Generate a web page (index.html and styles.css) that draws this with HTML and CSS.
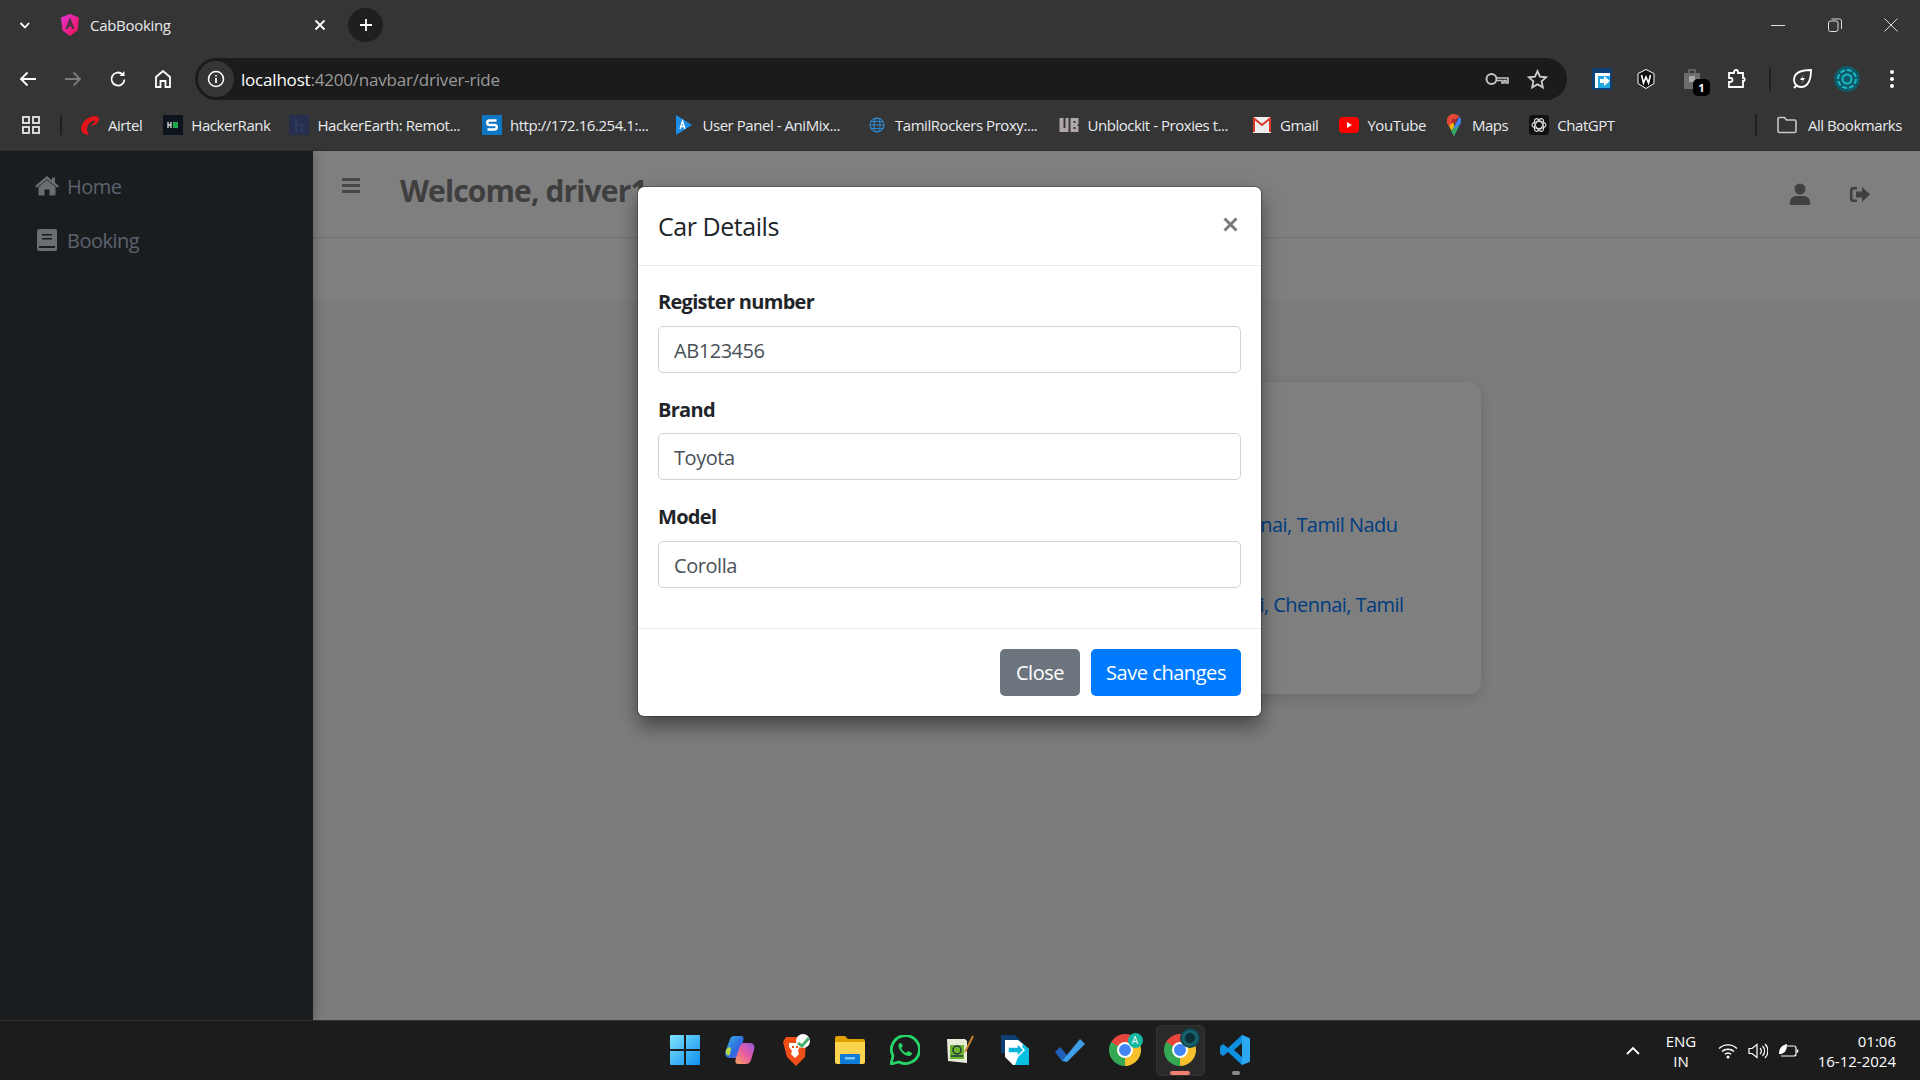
FILE: index.html
```html
<!DOCTYPE html>
<html lang="en">
<head>
    <meta charset="UTF-8">
    <meta name="viewport" content="width=device-width, initial-scale=1.0">
    <title>CabBooking</title>
    <link rel="stylesheet" href="styles.css">
</head>
<body>
    <!-- Browser tab strip -->
    <div class="tabstrip">
        <svg class="tab-list" width="14" height="14" viewBox="0 0 14 14"><path d="M2.5 5l4.500 4.500L11 5" fill="none" stroke="#fff" stroke-width="1.800"/></svg>
        <svg class="tab-favicon" width="20" height="22" viewBox="0 0 20 22">
            <defs><linearGradient id="ng" x1="0" y1="0" x2="1" y2="1"><stop offset="0" stop-color="#e535d8"/><stop offset="1" stop-color="#f0104e"/></linearGradient></defs>
            <path d="M10 0l9 3.500-1.500 13L10 22l-7.500-5.500L1 3.500z" fill="url(#ng)"/>
            <path d="M10 3.500L5.500 15h2l1-2.500h3l1 2.500h2zM9.200 10.800L10 8.500l.8 2.300z" fill="#353535"/>
        </svg>
        <span class="tab-title">CabBooking</span>
        <svg class="tab-close" width="12" height="12" viewBox="0 0 12 12"><path d="M1.500 1.500l9 9M10.500 1.500l-9 9" stroke="#fff" stroke-width="1.800"/></svg>
        <div class="tab-new"><svg width="14" height="14" viewBox="0 0 14 14"><path d="M7 1v12M1 7h12" stroke="#fff" stroke-width="1.800"/></svg></div>
        <div class="window-controls">
            <svg width="14" height="14" viewBox="0 0 14 14"><path d="M0 7.500h14" stroke="#ddd"/></svg>
            <svg width="14" height="14" viewBox="0 0 14 14"><rect x=".5" y="3" width="9.500" height="10.500" rx="2" fill="none" stroke="#ddd"/><path d="M3.500 1h8a2 2 0 0 1 2 2v8" fill="none" stroke="#ddd"/></svg>
            <svg width="14" height="14" viewBox="0 0 14 14"><path d="M.5.500l13 13M13.500.500l-13 13" stroke="#ddd"/></svg>
        </div>
    </div>

    <!-- Address bar row -->
    <div class="toolbar">
        <div class="tool-btn"><svg width="20" height="20" viewBox="0 0 20 20"><path d="M18 10H3M9.500 3.500L3 10l6.500 6.500" fill="none" stroke="#fff" stroke-width="1.800"/></svg></div>
        <div class="tool-btn"><svg width="20" height="20" viewBox="0 0 20 20"><path d="M2 10h15M10.500 3.500L17 10l-6.500 6.500" fill="none" stroke="#7b7b7b" stroke-width="1.800"/></svg></div>
        <div class="tool-btn"><svg width="20" height="20" viewBox="0 0 20 20"><path d="M16.500 10.500a6.500 6.500 0 1 1-2-5.200" fill="none" stroke="#fff" stroke-width="1.800"/><path d="M16.500 2v5h-5z" fill="#fff"/></svg></div>
        <div class="tool-btn"><svg width="20" height="20" viewBox="0 0 20 20"><path d="M10 2L3 8v10h4.500v-6h5v6H17V8z" fill="none" stroke="#fff" stroke-width="1.800"/></svg></div>
        <div class="omnibox">
            <div class="site-chip"><svg width="18" height="18" viewBox="0 0 18 18"><circle cx="9" cy="9" r="7.500" fill="none" stroke="#fff" stroke-width="1.500"/><path d="M9 8v5M9 5v1.600" stroke="#fff" stroke-width="1.700"/></svg></div>
            <span class="url"><span class="url-host">localhost</span>:4200/navbar/driver-ride</span>
            <svg class="omni-key" width="24" height="14" viewBox="0 0 24 14"><circle cx="6.500" cy="7" r="5" fill="none" stroke="#c4c4c4" stroke-width="2"/><path d="M11.500 6H23v5h-2V8.500h-2V11h-2V8.500h-5.500" fill="none" stroke="#c4c4c4" stroke-width="1.600"/></svg>
            <svg class="omni-star" width="21" height="21" viewBox="0 0 20 20"><path d="M10 2l2.400 5.300 5.800.6-4.300 3.900 1.200 5.700L10 14.600l-5.100 2.900 1.200-5.700-4.300-3.900 5.800-.6z" fill="none" stroke="#d0d0d0" stroke-width="1.700"/></svg>
        </div>
        <div class="toolbar-exts">
            <div class="tool-btn"><svg width="20" height="22" viewBox="0 0 20 22"><rect width="20" height="22" rx="2" fill="#0d3f73"/><path d="M3 20V5h15v15z" fill="#23a6e0"/><path d="M3 5h15v3H6v12H3z" fill="#fff"/><path d="M8 11h4V8l6 5-6 5v-3H8z" fill="#fff"/></svg></div>
            <div class="tool-btn ext-wallet"><svg width="20" height="20" viewBox="0 0 20 20"><path d="M10 .500l8 4v10l-8 5-8-5v-10z" fill="#111" stroke="#fff"/><path d="M5.500 6l2 8 2.500-6 2.500 6 2-8" fill="none" stroke="#fff" stroke-width="1.600"/></svg></div>
            <div class="tool-btn ext-badged">
                <svg width="18" height="22" viewBox="0 0 18 22"><path d="M1 5h16v16H1z" fill="#6d6d6d"/><path d="M6 5V2h6v3" fill="none" stroke="#6d6d6d" stroke-width="1.500"/><rect x="6" y="8" width="6" height="6" fill="#a8a8a8"/></svg>
                <span class="ext-count">1</span>
            </div>
            <div class="tool-btn"><svg width="20" height="20" viewBox="0 0 20 20"><path d="M2 4h5V3a2 2 0 0 1 4 0v1h5v5h1a2 2 0 0 1 0 3h-1v6H2v-5h1.500a2 2 0 0 0 0-4H2z" fill="none" stroke="#fff" stroke-width="1.800"/></svg></div>
            <div class="toolbar-sep"></div>
            <div class="tool-btn"><svg width="22" height="22" viewBox="0 0 22 22"><path d="M20 2C10 2 3 5 3 12c0 4 3 7 7 7 7 0 10-7 10-17zM3 20l3-3" fill="none" stroke="#fff" stroke-width="1.800"/><path d="M13 6l-4 6h3l-2 4 4-6h-3z" fill="#fff"/></svg></div>
            <div class="tool-btn"><svg width="26" height="26" viewBox="0 0 26 26"><circle cx="13" cy="13" r="13" fill="#0e5a66"/><circle cx="13" cy="13" r="9" fill="none" stroke="#1bb7c7" stroke-width="2" stroke-dasharray="5 2"/><circle cx="13" cy="13" r="4.500" fill="none" stroke="#1bb7c7" stroke-width="2"/></svg></div>
            <div class="tool-btn"><svg width="6" height="20" viewBox="0 0 6 20"><circle cx="3" cy="3" r="2" fill="#fff"/><circle cx="3" cy="10" r="2" fill="#fff"/><circle cx="3" cy="17" r="2" fill="#fff"/></svg></div>
        </div>
    </div>

    <!-- Bookmarks row -->
    <div class="bookmarks">
        <svg class="apps-icon" width="18" height="18" viewBox="0 0 18 18"><g fill="none" stroke="#e8e8e8" stroke-width="1.800"><rect x="1" y="1" width="6" height="6"/><rect x="11" y="1" width="6" height="6"/><rect x="1" y="11" width="6" height="6"/><rect x="11" y="11" width="6" height="6"/></g></svg>
        <div class="bookmark-sep"></div>
        <div class="bm"><svg width="20" height="20" viewBox="0 0 20 20"><path d="M1 13C2 6 9 1 15 1c4 0 5 3 3 6-2 3-5 4-8 4 3-2 5-3 5-5-3-1-7 3-8 7 0 3 1 5 2 7-4 0-8-2-8-7z" fill="#e4141b"/></svg><span>Airtel</span></div>
        <div class="bm bm-hr"><svg width="20" height="20" viewBox="0 0 20 20"><rect width="20" height="20" fill="#0e141e"/><path d="M5 7v6M8 7v6M5 10h3" stroke="#ddd" stroke-width="1.300"/><rect x="10" y="7" width="5" height="6" fill="#1ba94c"/></svg><span>HackerRank</span></div>
        <div class="bm bm-long"><svg width="20" height="20" viewBox="0 0 20 20"><rect width="20" height="20" fill="#262f4d"/><path d="M7 3v14M7 10h6v7" fill="none" stroke="#2e3a60" stroke-width="2"/></svg><span>HackerEarth: Remot...</span></div>
        <div class="bm bm-long"><svg width="20" height="20" viewBox="0 0 20 20"><rect width="20" height="20" fill="#0e77c4"/><path d="M14.500 5.500h-7a1.500 1.500 0 0 0 0 4.500h5a1.500 1.500 0 0 1 0 4.500h-7" fill="none" stroke="#fff" stroke-width="2.400"/></svg><span>http://172.16.254.1:...</span></div>
        <div class="bm bm-long"><svg width="16" height="20" viewBox="0 0 16 20"><path d="M0 0l16 10L0 20z" fill="#1b8ee8"/><path d="M4 14l2.500-8 2.500 8M5 11.500h3" fill="none" stroke="#fff" stroke-width="1.400"/></svg><span>User Panel - AniMix...</span></div>
        <div class="bm bm-long"><svg width="16" height="16" viewBox="0 0 16 16"><g fill="none" stroke="#2f88cc" stroke-width="1.200"><circle cx="8" cy="8" r="7"/><ellipse cx="8" cy="8" rx="3" ry="7"/><path d="M1 8h14M2 4.500h12M2 11.500h12"/></g></svg><span>TamilRockers Proxy:...</span></div>
        <div class="bm bm-long"><svg width="19" height="14" viewBox="0 0 19 14"><path d="M0 0h4v10h2V0h3v14H0zM11 0h8v6h-1v2h1v6h-8zM14 3v2h2V3zm0 6v2h2V9z" fill="#b0a8a8" fill-rule="evenodd"/></svg><span>Unblockit - Proxies t...</span></div>
        <div class="bm"><svg width="18" height="16" viewBox="0 0 18 16"><rect width="18" height="16" fill="#eee"/><path d="M1 15V1.500L9 8l8-6.500V15" fill="none" stroke="#d8392b" stroke-width="2"/></svg><span>Gmail</span></div>
        <div class="bm bm-yt"><svg width="20" height="16" viewBox="0 0 20 16"><rect width="20" height="16" rx="4" fill="#f00"/><path d="M8 5l5 3-5 3z" fill="#fff"/></svg><span>YouTube</span></div>
        <div class="bm"><svg width="14" height="22" viewBox="0 0 14 22"><path d="M7 0a7 7 0 0 0-7 7c0 2 1 3.500 2 5l5 10z" fill="#f5b400"/><path d="M7 0a7 7 0 0 1 5.500 2.600L2 12C1 10.500 0 9 0 7a7 7 0 0 1 7-7z" fill="#e8453c"/><path d="M12.500 2.600A7 7 0 0 1 14 7c0 2-1 3.500-2 5l-5 10-2.500-5z" fill="#4285f4"/><path d="M12 12l-5 10-3-6z" fill="#34a853"/><circle cx="7" cy="7" r="2.500" fill="#a33"/></svg><span>Maps</span></div>
        <div class="bm"><svg width="20" height="20" viewBox="0 0 20 20"><rect width="20" height="20" rx="3" fill="#111"/><g fill="none" stroke="#ddd" stroke-width="1.100"><ellipse cx="10" cy="10" rx="7" ry="3.500"/><ellipse cx="10" cy="10" rx="7" ry="3.500" transform="rotate(60 10 10)"/><ellipse cx="10" cy="10" rx="7" ry="3.500" transform="rotate(120 10 10)"/></g></svg><span>ChatGPT</span></div>
        <div class="bookmark-sep bookmark-sep-end"></div>
        <div class="bm bm-all"><svg width="20" height="18" viewBox="0 0 20 18"><path d="M1 3a1.500 1.500 0 0 1 1.500-1.500h5l2 2.500h8A1.500 1.500 0 0 1 19 5.500V15a1.500 1.500 0 0 1-1.500 1.500h-15A1.500 1.500 0 0 1 1 15z" fill="none" stroke="#c8c8c8" stroke-width="1.600"/></svg><span>All Bookmarks</span></div>
    </div>

    <!-- The page itself -->
    <div class="app">
        <aside class="sidebar">
            <div class="side-link">
                <svg class="side-icon" width="24" height="20" viewBox="0 0 24 20"><path d="M12 4L3.500 11v7.500a1 1 0 0 0 1 1h5v-6h5v6h5a1 1 0 0 0 1-1V11zM12 0L0 10l1.600 1.800L12 3.200l10.400 8.600L24 10l-4-3.300V1.500h-3v2.800z"/></svg>
                <span>Home</span>
            </div>
            <div class="side-link">
                <svg class="side-icon" width="20" height="22" viewBox="0 0 20 22"><path d="M3 0h15a2 2 0 0 1 2 2v18a2 2 0 0 1-2 2H3a3 3 0 0 1-3-3V3a3 3 0 0 1 3-3zm2 5v1.500h10V5zm0 4v1.500h10V9zM2 17v2h16v-2z" fill-rule="evenodd"/></svg>
                <span>Booking</span>
            </div>
        </aside>
        <main class="main">
            <header class="topbar">
                <div class="menu-btn"><span></span><span></span><span></span></div>
                <h1 class="welcome">Welcome, driver1</h1>
                <div class="topbar-actions">
                    <svg width="20" height="22" viewBox="0 0 20 22"><circle cx="10" cy="6" r="5.500"/><path d="M0 22v-3a6 6 0 0 1 6-6h8a6 6 0 0 1 6 6v3z"/></svg>
                    <svg width="20" height="17" viewBox="0 0 20 17"><path d="M7 1H3a3 3 0 0 0-3 3v9a3 3 0 0 0 3 3h4v-2.500H3.500a1 1 0 0 1-1-1v-8a1 1 0 0 1 1-1H7z"/><path d="M12 1l8 7.500-8 7.500v-4.500H6v-6h6z"/></svg>
                </div>
            </header>
            <div class="subbar"></div>
            <div class="content">
                <div class="ride-card">
                    <p class="ride-line ride-line-first">nai, Tamil Nadu</p>
                    <p class="ride-line ride-line-second">i, Chennai, Tamil</p>
                </div>
            </div>
        </main>
        <div class="backdrop"></div>
        <div class="modal">
            <div class="modal-header">
                <h5>Car Details</h5>
                <svg width="15" height="15" viewBox="0 0 15 15"><path d="M1.500 1.500l12 12M13.500 1.500l-12 12" stroke="#7b7b7b" stroke-width="3"/></svg>
            </div>
            <div class="modal-body">
                <label class="field-label">Register number</label>
                <div class="field-input">AB123456</div>
                <label class="field-label">Brand</label>
                <div class="field-input">Toyota</div>
                <label class="field-label">Model</label>
                <div class="field-input">Corolla</div>
            </div>
            <div class="modal-footer">
                <button class="btn btn-close">Close</button>
                <button class="btn btn-save">Save changes</button>
            </div>
        </div>
    </div>

    <!-- Windows taskbar -->
    <footer class="taskbar">
        <div></div>
        <div class="task-icons">
            <div class="task-btn"><svg width="30" height="30" viewBox="0 0 30 30"><defs><linearGradient id="win" x1="0" y1="0" x2="1" y2="1"><stop offset="0" stop-color="#7fe3ff"/><stop offset="1" stop-color="#0f8ff0"/></linearGradient></defs><path d="M0 1a1 1 0 0 1 1-1h13v14H0zM16 0h13a1 1 0 0 1 1 1v13H16zM0 16h14v14H1a1 1 0 0 1-1-1zM16 16h14v13a1 1 0 0 1-1 1H16z" fill="url(#win)"/></svg></div>
            <div class="task-btn"><svg width="30" height="30" viewBox="0 0 30 30"><defs><linearGradient id="cop1" x1="0" y1="0" x2="1" y2="1"><stop offset="0" stop-color="#3bb4e8"/><stop offset=".6" stop-color="#2d6ae0"/><stop offset="1" stop-color="#8c5ce0"/></linearGradient><linearGradient id="cop2" x1="0" y1="1" x2="1" y2="0"><stop offset="0" stop-color="#f5a45c"/><stop offset=".5" stop-color="#e85ca0"/><stop offset="1" stop-color="#9058e0"/></linearGradient></defs><path d="M9 1h7c3 0 3 3 2 6l-4 14c-1 2-2 2-4 2H5c-4 0-6-3-4-8L5 4c1-2 2-3 4-3z" fill="url(#cop1)"/><path d="M1 15c1-2 3-4 5-2l-1 6c-1 3-5 1-4-4z" fill="#b8d84c"/><path d="M19 8h6c4 0 5 3 4 7l-3 10c-1 3-3 4-5 4h-8c-3 0-3-3-2-6l4-12c1-2 2-3 4-3z" fill="url(#cop2)"/></svg></div>
            <div class="task-btn task-brave"><svg width="30" height="32" viewBox="0 0 30 32"><path d="M4 3h16l4 4-1 16-9 9-9-9L1 8z" fill="#f04e16"/><path d="M7 9h9l2 3-2 5 1 3-4 4-4-4 1-3-3-4z" fill="#fff"/><path d="M10 13h2M14 13h2" stroke="#f04e16" stroke-width="2"/><circle cx="21" cy="7" r="7" fill="#fff"/><path d="M16 9l4 3 7-8" fill="none" stroke="#4caf70" stroke-width="3"/></svg></div>
            <div class="task-btn"><svg width="30" height="28" viewBox="0 0 30 28"><path d="M0 2a2 2 0 0 1 2-2h8l3 3h15a2 2 0 0 1 2 2v4H0z" fill="#e0a100"/><path d="M0 6h30v20a2 2 0 0 1-2 2H2a2 2 0 0 1-2-2z" fill="#fcd44f"/><rect x="5" y="18" width="20" height="10" rx="1" fill="#0f7ad8"/><rect x="10" y="21" width="10" height="2.500" fill="#7cc6ff"/></svg></div>
            <div class="task-btn"><svg width="30" height="30" viewBox="0 0 30 30"><path d="M1 29l2-8A14 14 0 1 1 9 27z" fill="none" stroke="#25d366" stroke-width="2.800"/><path d="M10 8c-2 1-2 4 0 7 2 3 5 6 9 6 2 0 3-2 3-3l-4-2-2 2c-2-1-4-3-5-5l2-2-2-3z" fill="#25d366"/></svg></div>
            <div class="task-btn"><svg width="28" height="30" viewBox="0 0 28 30"><path d="M1 4h18l2 2v22l-19-2z" fill="#e8ead8"/><path d="M4 10h14v14H4z" fill="#6cb52c"/><circle cx="11" cy="15" r="4" fill="none" stroke="#234" stroke-width="1.500"/><path d="M5 21h12" stroke="#234" stroke-width="1.500"/><path d="M19 17L27 1" stroke="#c9872a" stroke-width="2"/></svg></div>
            <div class="task-btn"><svg width="28" height="30" viewBox="0 0 28 30"><path d="M0 0h14l8 8v10H0z" fill="#0d3f73"/><path d="M4 5h13l11 9v16H12L4 22z" fill="#fff"/><path d="M14 30h14V14l-6-5z" fill="#07bfe0"/><path d="M7 12h9V8l7 7-7 7v-4H7z" fill="#0ab4d6" stroke="#fff" stroke-width="1.500"/></svg></div>
            <div class="task-btn"><svg width="30" height="24" viewBox="0 0 30 24"><path d="M0 14l5-5 7 8-5 6z" fill="#1f5fb8"/><path d="M7 23L25 1l5 5-18 18z" fill="#3f9ee8"/></svg></div>
            <div class="task-btn">
                <div class="chrome-logo"><span class="chrome-core"></span></div>
                <span class="chrome-badge">A</span>
            </div>
            <div class="task-btn task-btn-active">
                <div class="chrome-logo"><span class="chrome-core"></span></div>
                <span class="chrome-avatar"></span>
                <span class="task-pill task-pill-red"></span>
            </div>
            <div class="task-btn">
                <svg width="30" height="30" viewBox="0 0 30 30"><path d="M22 0l8 3.500v23L22 30 8 17l-5 4-3-2.500V11.500L3 9l5 4zm0 8l-8 7 8 7z" fill="#0f8fe0" fill-rule="evenodd"/><path d="M22 0l8 3.500v23L22 30z" fill="#2aa8f0"/></svg>
                <span class="task-pill task-pill-grey"></span>
            </div>
        </div>
        <div class="tray">
            <svg class="tray-chevron" width="16" height="10" viewBox="0 0 16 10"><path d="M2 8l6-6 6 6" fill="none" stroke="#fff" stroke-width="1.800"/></svg>
            <div class="tray-lang">ENG<br>IN</div>
            <div class="tray-status">
                <svg width="20" height="16" viewBox="0 0 20 16"><g fill="none" stroke="#fff" stroke-width="1.400"><path d="M1 5.500a13 13 0 0 1 18 0M4 8.500a9 9 0 0 1 12 0M6.800 11.300a5 5 0 0 1 6.400 0"/></g><circle cx="10" cy="14" r="1.500" fill="#fff"/></svg>
                <svg width="20" height="18" viewBox="0 0 20 18"><path d="M1 6.500h3L9 2.500v13L4 11.500H1z" fill="none" stroke="#fff" stroke-width="1.200"/><path d="M12 6a4 4 0 0 1 0 6M14.500 4a7 7 0 0 1 0 10M17 2a10 10 0 0 1 0 14" fill="none" stroke="#fff" stroke-width="1.200"/></svg>
                <svg width="21" height="16" viewBox="0 0 21 16"><path d="M9 3h7a2 2 0 0 1 2 2v6a2 2 0 0 1-2 2H3" fill="none" stroke="#fff" stroke-width="1.200"/><path d="M19.500 6.500v3" stroke="#fff" stroke-width="1.500"/><path d="M1 11C1 5 4 2 9 1c0 6-2 9-6 10z" fill="#fff"/></svg>
            </div>
            <div class="tray-clock">01:06<br>16-12-2024</div>
        </div>
    </footer>
</body>
</html>
```

FILE: styles.css
```css
* {
    box-sizing: border-box;
}
html, body {
    margin: 0;
    height: 100%;
}
body {
    width: 1920px;
    height: 1080px;
    overflow: hidden;
    display: flex;
    flex-direction: column;
    background-color: #353535;
    font-family: "Open Sans", "Noto Sans", sans-serif;
    color: #e8eaed;
}
svg {
    display: block;
    flex: none;
}

/* Browser chrome */
.tabstrip {
    height: 58px;
    display: flex;
    align-items: center;
    padding-bottom: 8px;
    flex: none;
}
.tab-list {
    margin-left: 18px;
}
.tab-favicon {
    margin-left: 28px;
}
.tab-title {
    margin-left: 10px;
    width: 224px;
    font-size: 15px;
    letter-spacing: -0.3px;
}
.tab-close {
    flex: none;
}
.tab-new {
    width: 35px;
    height: 34px;
    margin-left: 22px;
    border-radius: 50%;
    background-color: #1f1f1f;
    display: flex;
    align-items: center;
    justify-content: center;
}
.window-controls {
    margin-left: auto;
    width: 151px;
    padding-right: 22px;
    display: flex;
    justify-content: space-between;
    padding-left: 2px;
}
.toolbar {
    height: 42px;
    display: flex;
    align-items: center;
    padding-left: 5px;
    flex: none;
}
.tool-btn {
    width: 45px;
    height: 42px;
    display: flex;
    align-items: center;
    justify-content: center;
    position: relative;
    flex: none;
}
.ext-wallet {
    padding-right: 2px;
}
.omnibox {
    width: 1372px;
    height: 42px;
    margin-left: 10px;
    border-radius: 21px;
    background-color: #1b1b1b;
    display: flex;
    align-items: center;
    padding-left: 3px;
}
.site-chip {
    width: 36px;
    height: 36px;
    border-radius: 50%;
    background-color: #353535;
    display: flex;
    align-items: center;
    justify-content: center;
}
.url {
    margin-left: 7px;
    font-size: 17px;
    color: #9a9a9a;
    letter-spacing: -0.2px;
}
.url-host {
    color: #fff;
}
.omni-key {
    margin-left: auto;
}
.omni-star {
    margin-left: 18px;
    margin-right: 19px;
}
.toolbar-exts {
    display: flex;
    align-items: center;
    margin-left: 12px;
}
.toolbar-sep {
    width: 2px;
    height: 24px;
    margin: 0 8px 0 10px;
    background-color: #222;
}
.ext-count {
    position: absolute;
    left: 24px;
    top: 21px;
    width: 17px;
    height: 17px;
    border-radius: 5px;
    background-color: #000;
    color: #fff;
    font-size: 11px;
    font-weight: 700;
    line-height: 17px;
    text-align: center;
}
.bookmarks {
    height: 51px;
    display: flex;
    align-items: center;
    padding-left: 22px;
    border-bottom: 1px solid #2c2c2c;
    font-size: 15px;
    letter-spacing: -0.45px;
    flex: none;
}
.bookmark-sep {
    width: 2px;
    height: 20px;
    margin: 0 18px 0 20px;
    background-color: #1f1f1f;
    flex: none;
}
.bm {
    display: flex;
    align-items: center;
    gap: 8px;
    white-space: nowrap;
    margin-right: 21px;
    flex: none;
}
.bm svg {
    width: 20px;
}
.bm-hr {
    margin-right: 19px;
}
.bm-yt {
    margin-right: 18px;
}
.bm-long {
    width: 192.5px;
    margin-right: 0;
}
.bookmark-sep-end {
    height: 22px;
    margin: 0 20px 0 auto;
}
.bm-all {
    margin-right: 18px;
    gap: 11px;
}

/* The page behind the dialog */
.app {
    height: 869px;
    position: relative;
    display: flex;
    flex: none;
    overflow: hidden;
    background-color: #f8f9fa;
    font-size: 20px;
}
.sidebar {
    width: 313px;
    flex: none;
    padding: 8px 0 0 35px;
    background-color: #343a40;
    box-shadow: 2px 0 10px rgba(0, 0, 0, 0.25);
    position: relative;
}
.side-link {
    height: 54px;
    display: flex;
    align-items: center;
    color: #b6c4d6;
    font-size: 20px;
    letter-spacing: -0.5px;
}
.side-icon {
    width: 24px;
    margin-right: 8px;
    fill: #d4dae2;
}
.main {
    flex: 1;
    display: flex;
    flex-direction: column;
}
.topbar {
    height: 87px;
    display: flex;
    align-items: center;
    background-color: #fff;
    border-bottom: 1px solid #dee2e6;
    padding: 0 50px 8px 29px;
    flex: none;
}
.menu-btn {
    width: 18px;
    display: flex;
    flex-direction: column;
    gap: 3px;
    margin-bottom: 9px;
}
.menu-btn span {
    height: 3px;
    background-color: #8f8f8f;
}
.welcome {
    margin: 0 0 0 40px;
    font-size: 30px;
    font-weight: 700;
    letter-spacing: -0.88px;
    color: #7e7e7e;
}
.topbar-actions {
    margin-left: auto;
    display: flex;
    align-items: center;
    gap: 40px;
    margin-top: 8px;
    fill: #808080;
}
.subbar {
    height: 62px;
    background-color: #ffffff;
    flex: none;
}
.content {
    flex: 1;
    display: flex;
    justify-content: center;
    padding-top: 82px;
    padding-left: 0;
}
.ride-card {
    width: 728px;
    height: 312px;
    padding-top: 128px;
    border-radius: 12px;
    background-color: #fff;
    box-shadow: 0 4px 16px rgba(0, 0, 0, 0.15);
    text-align: right;
    color: #007bff;
}
.ride-line {
    margin: 0;
    line-height: 30px;
    letter-spacing: -0.55px;
}
.ride-line-first {
    padding-right: 83px;
}
.ride-line-second {
    margin-top: 50px;
    padding-right: 77px;
}

/* Dialog */
.backdrop {
    position: absolute;
    inset: 0;
    background-color: rgba(0, 0, 0, 0.5);
}
.modal {
    position: absolute;
    left: 638px;
    top: 36px;
    width: 623px;
    height: 529px;
    border-radius: 6px;
    background-color: #fff;
    box-shadow: 0 0 0 1px rgba(0, 0, 0, 0.25), 0 10px 20px rgba(0, 0, 0, 0.45);
    color: #212529;
    display: flex;
    flex-direction: column;
}
.modal-header {
    height: 79px;
    display: flex;
    justify-content: space-between;
    align-items: center;
    padding: 0 23px 0 20px;
    border-bottom: 1px solid #e9ecef;
    flex: none;
}
.modal-header h5 {
    margin: 0;
    font-size: 25px;
    font-weight: 400;
    letter-spacing: -0.45px;
}
.modal-header svg {
    margin-bottom: 3px;
}
.modal-body {
    flex: 1;
    padding: 20px 20px 0;
}
.field-label {
    display: block;
    height: 39.5px;
    font-size: 20px;
    font-weight: 700;
    line-height: 32px;
    letter-spacing: -0.7px;
}
.field-input {
    height: 47px;
    margin-bottom: 21px;
    padding: 0 15px;
    border: 1px solid #ced4da;
    border-radius: 5px;
    font-size: 20px;
    line-height: 47px;
    color: #495057;
    letter-spacing: -0.45px;
}
.modal-footer {
    height: 88px;
    display: flex;
    justify-content: flex-end;
    align-items: flex-start;
    gap: 11px;
    padding: 20px 20px 0;
    border-top: 1px solid #e9ecef;
    flex: none;
}
.btn {
    height: 47px;
    padding: 0;
    border: none;
    border-radius: 5px;
    color: #fff;
    font-family: inherit;
    font-size: 20px;
    letter-spacing: -0.45px;
}
.btn-close {
    width: 80px;
    background-color: #6c757d;
}
.btn-save {
    width: 150px;
    background-color: #007bff;
}

/* Windows taskbar */
.taskbar {
    height: 60px;
    display: grid;
    grid-template-columns: 1fr auto 1fr;
    background-color: #1c1c1c;
    border-top: 1px solid #333;
    flex: none;
}
.task-icons {
    display: flex;
}
.task-btn {
    width: 55px;
    height: 59px;
    display: flex;
    align-items: center;
    justify-content: center;
    padding-bottom: 2px;
    position: relative;
}
.task-brave {
    padding-left: 4px;
}
.task-btn-active::before {
    content: "";
    position: absolute;
    left: 3px;
    right: 3px;
    top: 4px;
    bottom: 4px;
    border-radius: 5px;
    background-color: #2a2a2a;
    border: 1px solid #333;
}
.chrome-logo {
    width: 32px;
    height: 32px;
    border-radius: 50%;
    position: relative;
    background: conic-gradient(#e8453c 0deg 60deg, #f7c02c 60deg 180deg, #34a853 180deg 300deg, #e8453c 300deg);
    display: flex;
    align-items: center;
    justify-content: center;
}
.chrome-core {
    width: 16px;
    height: 16px;
    border-radius: 50%;
    background-color: #4285f4;
    border: 2px solid #fff;
}
.chrome-badge {
    position: absolute;
    left: 30px;
    top: 12px;
    width: 15px;
    height: 15px;
    border-radius: 50%;
    background-color: #14b8a0;
    color: #fff;
    font-size: 10px;
    line-height: 15px;
    text-align: center;
}
.chrome-avatar {
    position: absolute;
    left: 27px;
    top: 7px;
    width: 20px;
    height: 20px;
    border-radius: 50%;
    background: radial-gradient(circle, #0b2f36 30%, #1a6a78 45%, #0c3a44 70%);
}
.task-pill {
    position: absolute;
    bottom: 5px;
    height: 4px;
    border-radius: 2px;
}
.task-pill-red {
    left: 17px;
    width: 20px;
    background-color: #f08070;
}
.task-pill-grey {
    left: 24px;
    width: 8px;
    background-color: #8a8a8a;
}
.tray {
    display: flex;
    align-items: center;
    justify-content: flex-end;
    padding-right: 24px;
    font-size: 15px;
    color: #fff;
    line-height: 20px;
}
.tray-chevron {
    margin-right: 20px;
}
.tray-lang {
    width: 40px;
    text-align: center;
    margin-right: 17px;
}
.tray-status {
    display: flex;
    align-items: center;
    gap: 10px;
    margin-right: 17px;
}
.tray-clock {
    width: 80px;
    text-align: right;
}
```
